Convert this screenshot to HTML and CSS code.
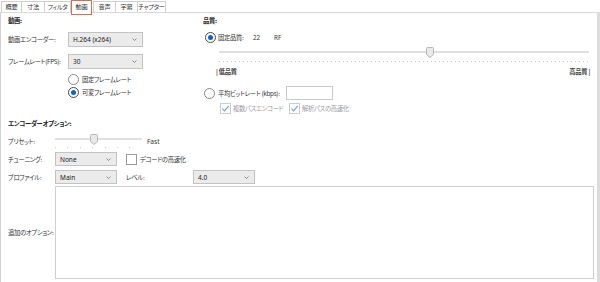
FILE: index.html
```html
<!DOCTYPE html>
<html lang="ja">
<head>
<meta charset="utf-8">
<link rel="stylesheet" href="styles.css">
</head>
<body>
<div class="tabs">
  <div class="tab t1">概要</div>
  <div class="tab t2">寸法</div>
  <div class="tab t3">フィルタ</div>
  <div class="tab t4 active">動画</div>
  <div class="tab t5">音声</div>
  <div class="tab t6">字幕</div>
  <div class="tab t7">チャプター</div>
</div>
<div class="panel">
  <div class="top">
    <div class="col-left">
      <div class="heading">動画:</div>
      <div class="row r-enc">
        <span class="lbl w60">動画エンコーダー:</span>
        <div class="select w75"><span class="val">H.264 (x264)</span><svg class="chev" width="5" height="3" viewBox="0 0 5 3"><path d="M0.5 0.5 L2.5 2.5 L4.5 0.5" fill="none" stroke="#777" stroke-width="0.8"/></svg></div>
      </div>
      <div class="row r-fps">
        <span class="lbl w60">フレームレート(FPS):</span>
        <div class="select w75"><span class="val">30</span><svg class="chev" width="5" height="3" viewBox="0 0 5 3"><path d="M0.5 0.5 L2.5 2.5 L4.5 0.5" fill="none" stroke="#777" stroke-width="0.8"/></svg></div>
      </div>
      <div class="radio-row rr1"><span class="radio"></span><span class="rtext">固定フレームレート</span></div>
      <div class="radio-row rr2"><span class="radio on"></span><span class="rtext">可変フレームレート</span></div>
    </div>
    <div class="col-right">
      <div class="heading">品質:</div>
      <div class="q-row">
        <span class="radio on"></span>
        <span class="q-lbl">固定品質:</span>
        <span class="q-val">22</span>
        <span class="q-rf">RF</span>
      </div>
      <div class="slider q-slider">
        <div class="track"></div>
        <div class="ticks ticks-fine"></div>
        <svg class="thumb" style="left:207px" width="8" height="11" viewBox="0 0 8 11"><path d="M0.5 1.5 Q0.5 0.5 1.5 0.5 H6.5 Q7.5 0.5 7.5 1.5 V7.5 L4 10.5 L0.5 7.5 Z" fill="#e9e9e9" stroke="#a8a8a8" stroke-width="0.8"/></svg>
      </div>
      <div class="q-labels"><span>| 低品質</span><span>高品質 |</span></div>
      <div class="br-row">
        <span class="radio"></span>
        <span class="br-lbl">平均ビットレート (kbps):</span>
        <div class="input"></div>
      </div>
      <div class="cb-row">
        <span class="cb dis"><svg width="11" height="11" viewBox="0 0 11 11"><path d="M2.3 5.6 L4.5 7.9 L8.8 2.8" fill="none" stroke="#78a4d6" stroke-width="1.2"/></svg></span>
        <span class="cb-text dis-text w54">複数パスエンコード</span>
        <span class="cb dis"><svg width="11" height="11" viewBox="0 0 11 11"><path d="M2.3 5.6 L4.5 7.9 L8.8 2.8" fill="none" stroke="#78a4d6" stroke-width="1.2"/></svg></span>
        <span class="cb-text dis-text">解析パスの高速化</span>
      </div>
    </div>
  </div>
  <div class="enc">
    <div class="heading">エンコーダーオプション:</div>
    <div class="row preset-row">
      <span class="lbl w47">プリセット:</span>
      <div class="slider p-slider">
        <div class="track"></div>
        <div class="ticks ticks-coarse"></div>
        <svg class="thumb" style="left:35px" width="8" height="11" viewBox="0 0 8 11"><path d="M0.5 1.5 Q0.5 0.5 1.5 0.5 H6.5 Q7.5 0.5 7.5 1.5 V7.5 L4 10.5 L0.5 7.5 Z" fill="#e9e9e9" stroke="#a8a8a8" stroke-width="0.8"/></svg>
      </div>
      <span class="fast">Fast</span>
    </div>
    <div class="row tune-row">
      <span class="lbl w47">チューニング:</span>
      <div class="select w62"><span class="val">None</span><svg class="chev" width="5" height="3" viewBox="0 0 5 3"><path d="M0.5 0.5 L2.5 2.5 L4.5 0.5" fill="none" stroke="#777" stroke-width="0.8"/></svg></div>
      <span class="cb en"></span>
      <span class="cb-text">デコードの高速化</span>
    </div>
    <div class="row prof-row">
      <span class="lbl w47">プロファイル:</span>
      <div class="select w62"><span class="val">Main</span><svg class="chev" width="5" height="3" viewBox="0 0 5 3"><path d="M0.5 0.5 L2.5 2.5 L4.5 0.5" fill="none" stroke="#777" stroke-width="0.8"/></svg></div>
      <span class="lbl lvl">レベル:</span>
      <div class="select w62"><span class="val">4.0</span><svg class="chev" width="5" height="3" viewBox="0 0 5 3"><path d="M0.5 0.5 L2.5 2.5 L4.5 0.5" fill="none" stroke="#777" stroke-width="0.8"/></svg></div>
    </div>
    <div class="row extra-row">
      <span class="lbl w47">追加のオプション:</span>
      <div class="textarea"></div>
    </div>
  </div>
</div>
</body>
</html>
```

FILE: styles.css
```css
* { box-sizing: border-box; }
html, body {
  margin: 0;
  padding: 0;
  background: #ffffff;
}
body {
  width: 600px;
  height: 282px;
  overflow: hidden;
  font-family: "Noto Sans CJK JP", "Noto Sans", sans-serif;
  font-feature-settings: "palt" 1;
  font-size: 6.3px;
  letter-spacing: -0.3px;
  color: #333333;
}

/* tabs */
.tabs {
  display: flex;
  align-items: flex-start;
  height: 12px;
  padding-left: 1px;
}
.tab {
  height: 11px;
  margin-top: 1px;
  border: 1px solid #cfcfcf;
  border-bottom: none;
  margin-right: -1px;
  font-size: 6.2px;
  line-height: 10px;
  text-align: center;
  color: #333;
  background: #fff;
  white-space: nowrap;
}
.t1 { width: 21px; }
.t2 { width: 24px; }
.t3 { width: 27px; }
.t4 { width: 21px; }
.t5 { width: 23px; }
.t6 { width: 23px; }
.t7 { width: 29px; }
.tab.active {
  position: relative;
  z-index: 1;
  height: 15px;
  margin-top: 0;
  margin-bottom: -3px;
  border: 1px solid #d2714f;
  line-height: 12px;
  margin-left: 1px;
  margin-right: 1px;
}

/* panel */
.panel {
  width: 600px;
  height: 270px;
  border-top: 1px solid #d9d9d9;
  border-left: 1px solid #d0d0d0;
  border-right: 3px solid #dcdcdc;
  padding-left: 7px;
}
.top {
  display: flex;
  align-items: flex-start;
}
.col-left {
  width: 195px;
  display: flex;
  flex-direction: column;
}
.col-right {
  width: 390px;
  display: flex;
  flex-direction: column;
}
.heading {
  margin-top: 4px;
  height: 8px;
  line-height: 8px;
  font-weight: bold;
  color: #222;
}
.row {
  display: flex;
  align-items: center;
}
.lbl { flex: none; white-space: nowrap; }
.w60 { width: 60px; }
.w47 { width: 47px; }
.r-enc { margin-top: 7px; height: 15px; }
.r-fps { margin-top: 7px; height: 15px; }

.select {
  flex: none;
  height: 15px;
  border: 1px solid #c3c3c3;
  background: #ebebeb;
  display: flex;
  align-items: center;
  justify-content: space-between;
  padding: 0 5px 0 4px;
}
.select .val {
  font-family: "Noto Sans", sans-serif;
  font-size: 6.5px;
  letter-spacing: 0;
  color: #222;
}
.w75 { width: 75px; }
.w62 { width: 62px; height: 14px; }
.chev { flex: none; }

.radio-row {
  display: flex;
  align-items: center;
  margin-left: 60px;
  height: 11px;
}
.rr1 { margin-top: 5px; }
.rr2 { margin-top: 2px; }
.radio {
  flex: none;
  width: 11px;
  height: 11px;
  border: 1px solid #8a8a8a;
  border-radius: 50%;
  background: #fff;
  display: flex;
  align-items: center;
  justify-content: center;
}
.radio.on { border-color: #4a4a4a; }
.radio.on::after {
  content: "";
  width: 5px;
  height: 5px;
  border-radius: 50%;
  background: #0a63c4;
}
.rtext { margin-left: 3px; white-space: nowrap; }

/* quality */
.q-row {
  display: flex;
  align-items: center;
  margin-top: 7px;
  height: 11px;
  margin-left: 2px;
}
.q-lbl { width: 35px; margin-left: 2px; white-space: nowrap; }
.q-val { width: 21px; font-family: "Noto Sans", sans-serif; font-size: 6.3px; letter-spacing: 0; }
.q-rf { font-family: "Noto Sans", sans-serif; font-size: 6.3px; letter-spacing: 0; }

.slider {
  position: relative;
  display: flex;
  flex-direction: column;
  flex: none;
}
.slider .track {
  height: 2px;
  background: #e0e0e0;
  margin-top: 5px;
}
.slider .ticks {
  height: 1px;
  margin-top: 8px;
}
.ticks-fine {
  background: repeating-linear-gradient(to right, #c8c8c8 0 1px, transparent 1px 4px);
}
.ticks-coarse {
  background: repeating-linear-gradient(to right, #cccccc 0 1px, transparent 1px 12.4px);
}
.slider .thumb {
  position: absolute;
  top: 1px;
}
.q-slider {
  margin-left: 16px;
  width: 370px;
  height: 16px;
  margin-top: 3px;
}
.q-labels {
  display: flex;
  justify-content: space-between;
  margin-left: 13px;
  width: 374px;
  margin-top: 6px;
  height: 8px;
  line-height: 8px;
  font-weight: bold;
  color: #444;
}
.br-row {
  display: flex;
  align-items: center;
  margin-top: 10px;
  height: 14px;
  margin-left: 1px;
}
.br-lbl { width: 68px; margin-left: 3px; white-space: nowrap; }
.input {
  width: 47px;
  height: 14px;
  border: 1px solid #c9c9c9;
  background: #fff;
}
.cb-row {
  display: flex;
  align-items: center;
  margin-top: 2px;
  height: 12px;
  margin-left: 17px;
}
.cb {
  flex: none;
  width: 11px;
  height: 11px;
  border: 1px solid #9a9a9a;
  background: #fff;
  display: flex;
  align-items: center;
  justify-content: center;
}
.cb svg { display: block; margin: -1px; }
.cb.dis { border-color: #cdcdcd; }
.cb-text { margin-left: 2px; white-space: nowrap; }
.dis-text { color: #9a9a9a; }
.w54 { width: 56px; }

/* encoder options */
.enc {
  display: flex;
  flex-direction: column;
}
.enc .heading { margin-top: 6px; }
.preset-row { margin-top: 6px; height: 16px; align-items: flex-start; }
.preset-row .lbl { line-height: 16px; }
.p-slider { width: 87px; height: 16px; }
.p-slider .track { margin-top: 4px; }
.p-slider .ticks { margin-top: 7px; }
.p-slider .thumb { top: 0; }
.fast {
  margin-left: 5px;
  line-height: 16px;
  font-family: "Noto Sans", sans-serif;
  font-size: 6.5px;
  letter-spacing: 0;
}
.tune-row { margin-top: 2px; height: 14px; }
.tune-row .cb { margin-left: 9px; }
.tune-row .cb-text { margin-left: 3px; }
.prof-row { margin-top: 4px; height: 14px; }
.lvl { margin-left: 9px; width: 67px; }
.extra-row { margin-top: 2px; height: 93px; }
.textarea {
  width: 539px;
  height: 93px;
  border: 1px solid #cfcfcf;
  background: #fff;
}
```
